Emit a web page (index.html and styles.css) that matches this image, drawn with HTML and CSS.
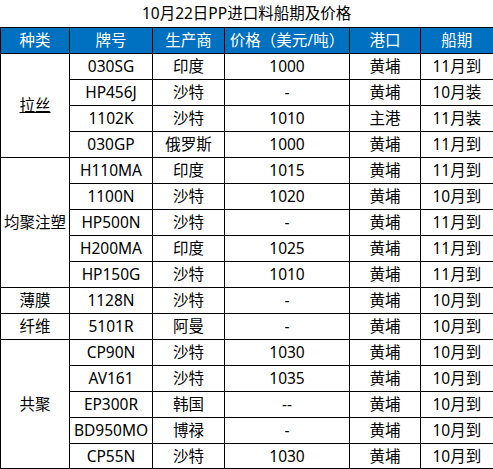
FILE: index.html
```html
<!DOCTYPE html>
<html>
<head>
  <link rel="stylesheet" href="styles.css">
</head>
<body>
  <table class="price-table">
    <colgroup>
      <col class="c-type">
      <col class="c-grade">
      <col class="c-maker">
      <col class="c-price">
      <col class="c-port">
      <col class="c-ship">
    </colgroup>
    <tr class="title-row">
      <td class="title" colspan="6">10月22日PP进口料船期及价格</td>
    </tr>
    <tr class="head">
      <th>种类</th>
      <th>牌号</th>
      <th>生产商</th>
      <th>价格（美元/吨）</th>
      <th>港口</th>
      <th>船期</th>
    </tr>
    <tr>
      <td rowspan="4"><span class="marked">拉丝</span></td>
      <td>030SG</td><td>印度</td><td>1000</td><td>黄埔</td><td>11月到</td>
    </tr>
    <tr><td>HP456J</td><td>沙特</td><td>-</td><td>黄埔</td><td>10月装</td></tr>
    <tr><td>1102K</td><td>沙特</td><td>1010</td><td>主港</td><td>11月装</td></tr>
    <tr><td>030GP</td><td>俄罗斯</td><td>1000</td><td>黄埔</td><td>11月到</td></tr>
    <tr>
      <td rowspan="5">均聚注塑</td>
      <td>H110MA</td><td>印度</td><td>1015</td><td>黄埔</td><td>11月到</td>
    </tr>
    <tr><td>1100N</td><td>沙特</td><td>1020</td><td>黄埔</td><td>10月到</td></tr>
    <tr><td>HP500N</td><td>沙特</td><td>-</td><td>黄埔</td><td>11月到</td></tr>
    <tr><td>H200MA</td><td>印度</td><td>1025</td><td>黄埔</td><td>11月到</td></tr>
    <tr><td>HP150G</td><td>沙特</td><td>1010</td><td>黄埔</td><td>11月到</td></tr>
    <tr>
      <td>薄膜</td>
      <td>1128N</td><td>沙特</td><td>-</td><td>黄埔</td><td>10月到</td>
    </tr>
    <tr>
      <td>纤维</td>
      <td>5101R</td><td>阿曼</td><td>-</td><td>黄埔</td><td>10月到</td>
    </tr>
    <tr>
      <td class="bottom" rowspan="5">共聚</td>
      <td>CP90N</td><td>沙特</td><td>1030</td><td>黄埔</td><td>10月到</td>
    </tr>
    <tr><td>AV161</td><td>沙特</td><td>1035</td><td>黄埔</td><td>10月到</td></tr>
    <tr><td>EP300R</td><td>韩国</td><td>--</td><td>黄埔</td><td>10月到</td></tr>
    <tr><td>BD950MO</td><td>博禄</td><td>-</td><td>黄埔</td><td>10月到</td></tr>
    <tr><td>CP55N</td><td>沙特</td><td>1030</td><td>黄埔</td><td>10月到</td></tr>
  </table>
</body>
</html>
```

FILE: styles.css
```css
body {
  margin: 0;
  background: #fff;
  font-family: "Noto Sans", "Noto Sans CJK SC", sans-serif;
  font-size: 15.5px;
  color: #000;
}

.price-table {
  border-collapse: collapse;
  table-layout: fixed;
  width: 493px;
}

.c-type { width: 69px; }
.c-grade { width: 83px; }
.c-maker { width: 72px; }
.c-price { width: 125px; }
.c-port { width: 71px; }
.c-ship { width: 73px; }

.price-table tr {
  height: 26px;
}

.price-table .title-row {
  height: 27px;
}

.price-table td,
.price-table th {
  border: 1px solid #000;
  padding: 0;
  text-align: center;
  vertical-align: middle;
  font-weight: normal;
  line-height: 20px;
  white-space: nowrap;
  overflow: hidden;
}

.price-table .title {
  border-top: none;
  border-left: none;
}

.price-table tr:last-child td,
.price-table .bottom {
  border-bottom-width: 2px;
}

.price-table td:last-child,
.price-table th:last-child {
  border-right-width: 2px;
}

.head th {
  background: #0070c0;
  color: #fff;
}

.marked {
  text-decoration: underline;
}
```
